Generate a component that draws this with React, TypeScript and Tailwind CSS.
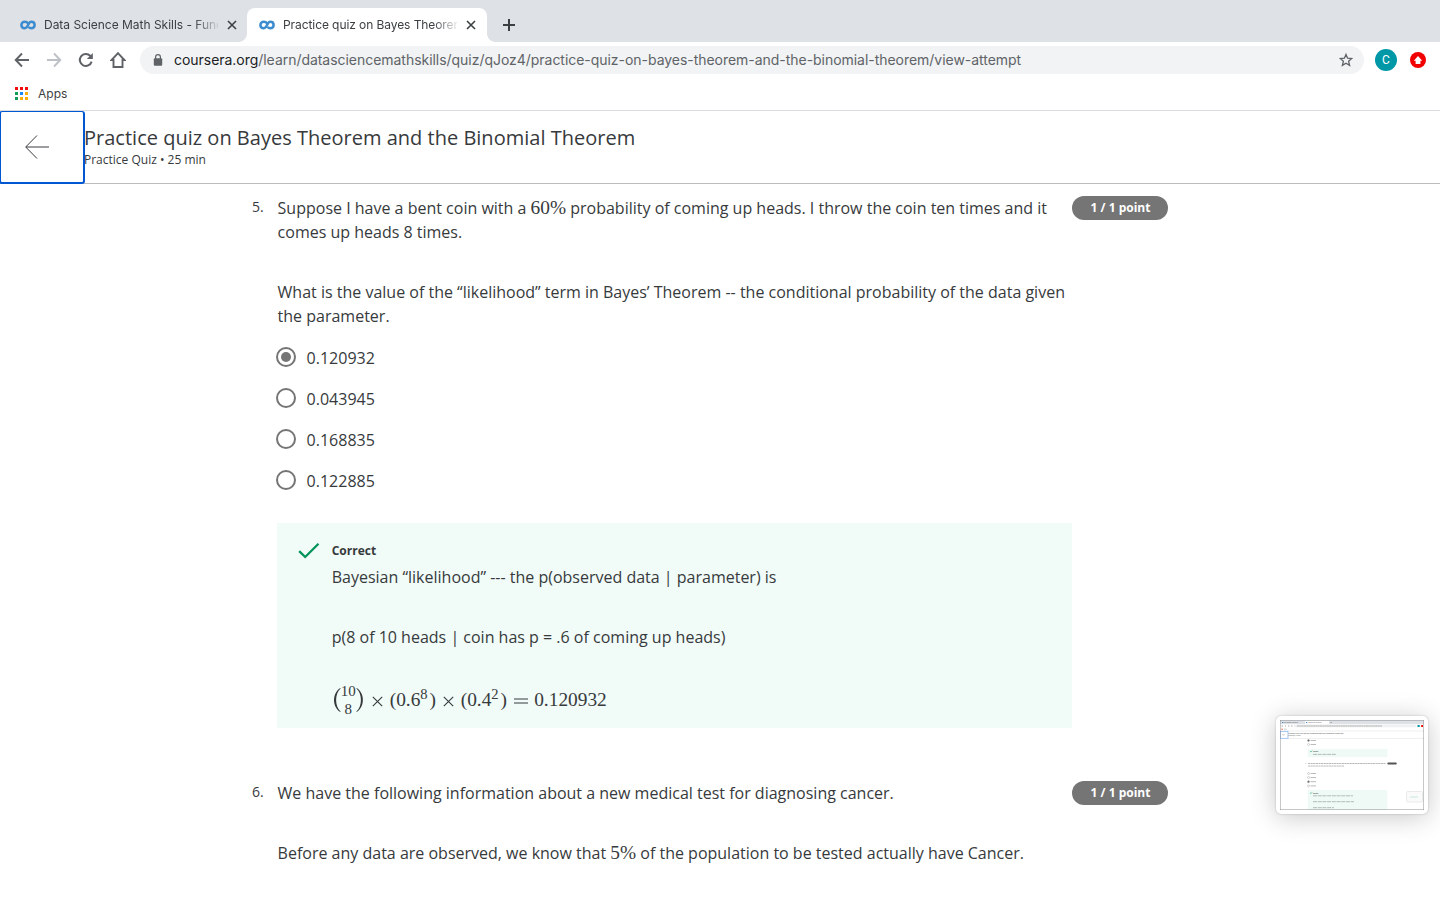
import React from "react";

const OPTIONS = ["0.120932", "0.043945", "0.168835", "0.122885"];

function CourseraMark() {
  return (
    <svg width="16" height="16" viewBox="0 0 16 16" className="shrink-0" fill="none" stroke="#3c8ccf" strokeWidth="2.5">
      <path d="M8 6.3C7.3 5.3 6.2 4.8 4.8 4.8C2.8 4.8 1.4 6.1 1.4 8S2.8 11.2 4.8 11.2C8.6 11.2 7.8 4.8 11.2 4.8C13.2 4.8 14.6 6.1 14.6 8S13.2 11.2 11.2 11.2C9.9 11.2 9.2 10.7 8.6 10" />
    </svg>
  );
}

function Close() {
  return (
    <svg width="10" height="10" viewBox="0 0 10 10" className="shrink-0" stroke="#3c4043" strokeWidth="1.6">
      <path d="M1 1L9 9M9 1L1 9" />
    </svg>
  );
}

function TabBar() {
  return (
    <div className="flex h-[42px] items-end bg-[#dee1e6] text-[12px] text-[#3c4043]">
      <div className="flex h-[34px] w-[247px] items-center pl-5">
        <CourseraMark />
        <span className="ml-2 w-[174px] whitespace-nowrap font-['Inter'] tracking-[-0.02px] [mask-image:linear-gradient(to_right,black_150px,transparent_177px)]">
          Data Science Math Skills - Func
        </span>
        <span className="ml-[9px]"><Close /></span>
      </div>
      <div className="relative flex h-[34px] w-[240px] items-center rounded-t-lg bg-white pl-3">
        <span className="absolute -left-2 bottom-0 h-2 w-2 bg-[radial-gradient(circle_at_0_0,transparent_7.5px,white_8px)]" />
        <span className="absolute -right-2 bottom-0 h-2 w-2 bg-[radial-gradient(circle_at_100%_0,transparent_7.5px,white_8px)]" />
        <CourseraMark />
        <span className="ml-2 w-[174px] whitespace-nowrap font-['Inter'] tracking-[-0.08px] [mask-image:linear-gradient(to_right,black_150px,transparent_177px)]">
          Practice quiz on Bayes Theorem
        </span>
        <span className="ml-[9px]"><Close /></span>
      </div>
      <div className="flex h-[34px] items-center pl-4">
        <svg width="12" height="12" viewBox="0 0 12 12" stroke="#3c4043" strokeWidth="2">
          <path d="M6 0V12M0 6H12" />
        </svg>
      </div>
    </div>
  );
}

function Toolbar() {
  return (
    <div className="flex h-9 items-center pl-[14px] text-[#5f6368]">
      <svg width="16" height="16" viewBox="0 0 16 16" fill="none" stroke="#5f6368" strokeWidth="1.9">
        <path d="M15 8H2M8 1.5L1.7 8L8 14.5" />
      </svg>
      <svg className="ml-4" width="16" height="16" viewBox="0 0 16 16" fill="none" stroke="#bdc1c6" strokeWidth="1.9">
        <path d="M1 8H14M8 1.5L14.3 8L8 14.5" />
      </svg>
      <svg className="ml-4" width="16" height="16" viewBox="0 0 16 16" fill="none" stroke="#5f6368" strokeWidth="2">
        <path d="M13.6 9.6A6 6 0 1 1 12.2 3.8L14 5.6" />
        <path d="M14.8 1V7H8.8Z" fill="#5f6368" stroke="none" />
      </svg>
      <svg className="ml-4" width="16" height="16" viewBox="0 0 16 16" fill="none" stroke="#5f6368" strokeWidth="1.9">
        <path d="M8 1.2L1.6 8H3.5V15H12.5V8H14.4Z" />
      </svg>
      <div className="ml-[14px] flex h-7 w-[1224px] items-center rounded-full bg-[#f1f3f4] pl-[13px] pr-[11px]">
        <svg width="10" height="12" viewBox="0 0 10 12">
          <rect x="0.8" y="4.3" width="8.4" height="7.4" rx="1" fill="#5f6368" />
          <path d="M2.6 5V3A2.4 2.4 0 0 1 7.4 3V5" fill="none" stroke="#5f6368" strokeWidth="1.2" />
        </svg>
        <span className="ml-[11px] flex-1 whitespace-nowrap font-['Inter'] text-[14px] tracking-[-0.036px]">
          <span className="text-[#202124]">coursera.org</span>
          /learn/datasciencemathskills/quiz/qJoz4/practice-quiz-on-bayes-theorem-and-the-binomial-theorem/view-attempt
        </span>
        <svg width="14" height="14" viewBox="0 0 14 14" fill="none" stroke="#5f6368" strokeWidth="1.3">
          <path d="M7 1.4L8.6 5.2L12.8 5.5L9.6 8.2L10.6 12.4L7 10.2L3.4 12.4L4.4 8.2L1.2 5.5L5.4 5.2Z" />
        </svg>
      </div>
      <div className="ml-[11px] flex h-[22px] w-[22px] items-center justify-center rounded-full bg-[#0097a7] font-['Roboto'] text-[12px] text-white">C</div>
      <svg className="ml-[13px]" width="16" height="16" viewBox="0 0 16 16">
        <circle cx="8" cy="8" r="8" fill="#f20000" />
        <path d="M8 4L12.2 8.8H10.4V12H5.6V8.8H3.8Z" fill="white" />
      </svg>
    </div>
  );
}

const APP_COLORS = ["#f20d0d", "#f20d0d", "#f20d0d", "#0f9d58", "#1a86f2", "#fbac05", "#0f9d58", "#fbac05", "#fbac05"];

function Bookmarks() {
  return (
    <div className="flex h-[33px] items-center border-b border-[#dadce0] pb-px pl-[15px]">
      <svg width="13" height="13" viewBox="0 0 13 13">
        {APP_COLORS.map((c, i) => (
          <rect key={i} x={(i % 3) * 5} y={Math.floor(i / 3) * 5} width="3" height="3" fill={c} />
        ))}
      </svg>
      <span className="ml-[10px] font-['Inter'] text-[12px] text-[#3c4043]">Apps</span>
    </div>
  );
}

function QuizHeader() {
  return (
    <div className="flex h-[73px] border-b border-[#bdbdbd]">
      <div className="z-10 -ml-px flex h-[73px] w-[86px] shrink-0 items-center rounded-[3px] border-2 border-t-[1.5px] border-[#0156d1] bg-white pl-6">
        <svg width="24" height="24" viewBox="0 0 24 24" fill="none" stroke="#373a3c" strokeWidth="1">
          <path d="M24 12H1M12 0.5L0.7 12L12 23.5" />
        </svg>
      </div>
      <div className="-ml-px pt-[13px]">
        <h1 className="text-[20px] leading-[28px] tracking-[0.01px]">Practice quiz on Bayes Theorem and the Binomial Theorem</h1>
        <p className="text-[12px] leading-[16px]">Practice Quiz • 25 min</p>
      </div>
    </div>
  );
}

function Maths({ children }: { children: React.ReactNode }) {
  return <span className="font-['Liberation_Serif'] text-[19.36px] leading-none">{children}</span>;
}

function Points() {
  return (
    <div className="flex h-6 w-24 shrink-0 items-center justify-center rounded-full bg-[#757575] pl-px text-[12px] font-bold text-white">
      1 / 1 point
    </div>
  );
}

function Radio({ checked }: { checked: boolean }) {
  return (
    <span className="flex h-5 w-5 items-center justify-center rounded-full border-2 border-[#757575]">
      {checked && <span className="h-[10px] w-[10px] rounded-full bg-[#757575]" />}
    </span>
  );
}

function Paren({ flip }: { flip?: boolean }) {
  return (
    <svg width="9" height="26" viewBox="0 0 9 26" className={flip ? "-scale-x-100" : ""} fill="#373a3c">
      <path d="M8.3 1C0 6 0 20 8.3 25L8.6 24.5C2.6 19.5 2.6 6.5 8.6 1.5Z" />
    </svg>
  );
}

function Times() {
  return (
    <svg width="11" height="11" viewBox="0 0 11 11" className="mt-[2px]" stroke="#373a3c" strokeWidth="1.1">
      <path d="M0.8 0.8L10.2 10.2M10.2 0.8L0.8 10.2" />
    </svg>
  );
}

function Formula() {
  return (
    <div className="flex h-9 items-center whitespace-pre font-['Liberation_Serif'] text-[19.36px] leading-none">
      <Paren />
      <span className="flex w-[15px] flex-col items-center gap-[4px] text-[15px] leading-[14px]"><span>10</span><span>8</span></span>
      <Paren flip />
      <span className="flex w-[25px] justify-center"><Times /></span>
      <span className="w-[47px]">(0.6<sup className="top-[-7px] text-[14.5px]">8</sup><span className="ml-[2px]">)</span></span>
      <span className="flex w-[24px] justify-center"><Times /></span>
      <span className="w-[48px]">(0.4<sup className="top-[-7px] text-[14.5px]">2</sup><span className="ml-[2px]">)</span></span>
      <span className="flex w-[25.5px] justify-start pl-[5px]">
        <svg width="14" height="6" viewBox="0 0 14 6" className="mt-[2px]" stroke="#373a3c"><path d="M0 1H14M0 5H14" /></svg>
      </span>
      <span>0.120932</span>
    </div>
  );
}

function Question5() {
  return (
    <section className="flex h-[585px] pt-3">
      <div className="-mt-px w-[277px] shrink-0 pl-[252px] text-[14px] leading-[24px]">5.</div>
      <div className="w-[795px] shrink-0">
        <p className="pl-[0.6px]">Suppose I have a bent coin with a <Maths>60%</Maths> probability of coming up heads. I throw the coin ten times and it<br />comes up heads 8 times.</p>
        <p className="mt-9 pl-[0.6px]">What is the value of the “likelihood” term in Bayes’ Theorem -- the conditional probability of the data given<br />the parameter.</p>
        <div className="-ml-px mt-[8px]">
          {OPTIONS.map((option, i) => (
            <div key={option} className="flex h-[41px] items-center gap-[10.6px]">
              <Radio checked={i === 0} />
              <span className="pt-[2px]">{option}</span>
            </div>
          ))}
        </div>
        <div className="mt-[23px] flex h-[205px] bg-[#f1fbf8] pl-[21px] pt-[18px]">
          <svg className="mt-[1px]" width="22" height="18" viewBox="0 0 22 18" fill="none" stroke="#00945a" strokeWidth="2.3">
            <path d="M1.2 9.2L7.2 15L20.5 1.8" />
          </svg>
          <div className="ml-[11.7px]">
            <p className="text-[12px] font-bold leading-[20px]">Correct</p>
            <p className="mt-1">Bayesian “likelihood” --- the p(observed data | parameter) is</p>
            <p className="mt-9">p(8 of 10 heads | coin has p = .6 of coming up heads)</p>
            <div className="mt-[33px]"><Formula /></div>
          </div>
        </div>
      </div>
      <Points />
    </section>
  );
}

function Question6() {
  return (
    <section className="flex pt-3">
      <div className="-mt-px w-[277px] shrink-0 pl-[252px] text-[14px] leading-[24px]">6.</div>
      <div className="w-[795px] shrink-0 pl-[0.6px]">
        <p>We have the following information about a new medical test for diagnosing cancer.</p>
        <p className="mt-9">Before any data are observed, we know that <Maths>5%</Maths> of the population to be tested actually have Cancer.</p>
      </div>
      <Points />
    </section>
  );
}

function Preview() {
  return (
    <div className="absolute left-[1276px] top-[716px] h-[98px] w-[152px] rounded-[5px] bg-white p-[4px] shadow-[0_3px_26px_rgba(0,0,0,0.22),0_0_2px_rgba(0,0,0,0.25)]">
      <svg width="144" height="90" viewBox="0 0 144 90" fontFamily="Open Sans" fill="#373a3c">
        <rect width="144" height="90" fill="white" />
        <rect width="144" height="4.2" fill="#dee1e6" />
        <rect x="25" y="0.8" width="24" height="3.4" fill="white" />
        <rect x="2" y="2" width="1.3" height="1" fill="#3c8ccf" />
        <rect x="26" y="2" width="1.3" height="1" fill="#3c8ccf" />
        <g fontSize="1.25">
          <text x="4" y="2.9">Data Science Math Skills</text>
          <text x="28.5" y="2.9">Practice quiz on Bayes</text>
        </g>
        <path d="M50.3 2.5H52M1.5 6H3M5 6H6M8 6H9.4M11 6H12.5M134 6H135.5" stroke="#999" strokeWidth="0.8" />
        <rect x="14" y="4.8" width="122" height="2.4" rx="1.2" fill="#eef0f1" />
        <path d="M17 6H102" stroke="#aaa" strokeWidth="0.9" strokeDasharray="2 .3" />
        <rect x="137.5" y="5" width="2.2" height="2" fill="#0097a7" />
        <rect x="141.2" y="5" width="1.8" height="2" fill="#f20000" />
        <path d="M1.2 9.2H3" stroke="#f07850" strokeWidth="1" />
        <path d="M4 9.2H6.5" stroke="#bbb" strokeWidth="0.8" />
        <path d="M0 11H144M8 18.4H144" stroke="#ddd" strokeWidth="0.5" />
        <rect x="0.4" y="11.3" width="7.6" height="7" fill="none" stroke="#7fb0f0" strokeWidth="0.7" />
        <path d="M2.6 14.7H5M3.7 13.6L2.6 14.7L3.7 15.8" fill="none" stroke="#999" strokeWidth="0.3" />
        <text x="8.3" y="14.4" fontSize="2">Practice quiz on Bayes Theorem and the Binomial Theorem</text>
        <text x="8.3" y="16.4" fontSize="1.2">Practice Quiz • 25 min</text>
        <g fill="none" stroke="#999" strokeWidth="0.4">
          <circle cx="28.5" cy="20.5" r="1" fill="#666" />
          <circle cx="28.5" cy="24.5" r="1" />
          <circle cx="28.5" cy="53.5" r="1" />
          <circle cx="28.5" cy="57.5" r="1" />
          <circle cx="28.5" cy="61.7" r="1" fill="#666" />
          <circle cx="28.5" cy="65.9" r="1" />
        </g>
        <path d="M30.5 20.5H36M30.5 24.5H36M30.5 53.5H36M30.5 57.5H36M30.5 61.7H36M30.5 65.9H36" stroke="#bbb" strokeWidth="1" />
        <rect x="27.7" y="29" width="79.6" height="8" fill="#effaf6" />
        <rect x="27.7" y="70" width="79.6" height="20" fill="#effaf6" />
        <path d="M30 31.2L31 32L32.2 30.6M30 72.8L31 73.6L32.2 72.2" fill="none" stroke="#00945a" strokeWidth="0.5" />
        <text x="33" y="32.1" fontSize="1.4" fontWeight="700">Correct</text>
        <text x="33" y="73.5" fontSize="1.4" fontWeight="700">Correct</text>
        <path d="M33 34.4H56M33 75.8H73M33 81.7H74M33 87.7H54" stroke="#aab3b0" strokeWidth="0.9" strokeDasharray="4 .7" />
        <path d="M25.5 43.5H26.2M28 43.5H106M28 46H64" stroke="#aaa" strokeWidth="0.8" strokeDasharray="2.2 .4" />
        <rect x="107.3" y="42.5" width="9.5" height="2.1" rx="1" fill="#555" />
        <rect x="126.5" y="71.5" width="16" height="10.5" rx="1" fill="#fafafa" stroke="#e3e5e5" strokeWidth="0.8" />
        <rect x="130" y="76" width="8" height="2" fill="#e1f1eb" />
        <path d="M0 0H144V90H0Z" fill="none" stroke="#8c8f92" strokeWidth="1" />
      </svg>
    </div>
  );
}

export default function App() {
  return (
    <div className="relative h-[900px] w-[1440px] overflow-hidden bg-white font-['Open_Sans'] text-[16px] leading-[24px] text-[#373a3c]">
      <TabBar />
      <Toolbar />
      <Bookmarks />
      <QuizHeader />
      <Question5 />
      <Question6 />
      <Preview />
    </div>
  );
}
